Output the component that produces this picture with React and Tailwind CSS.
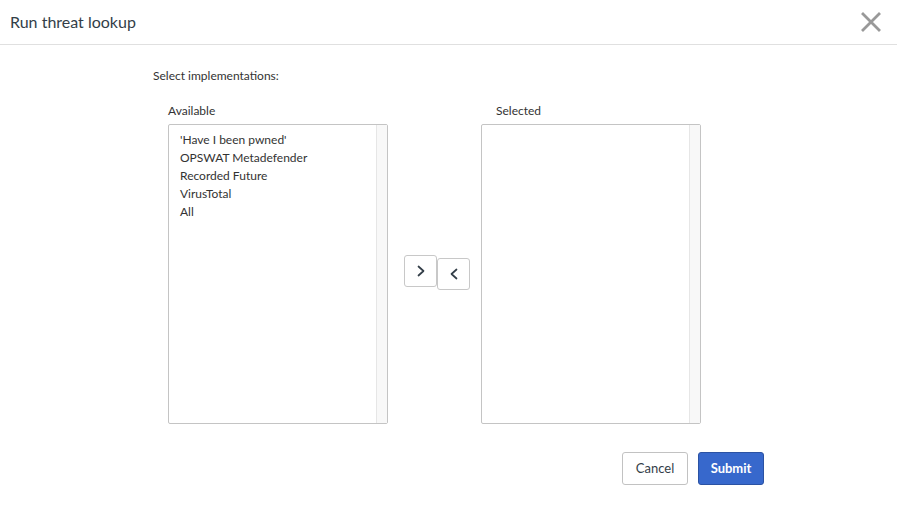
import React from 'react';

const available = ["'Have I been pwned'", 'OPSWAT Metadefender', 'Recorded Future', 'VirusTotal', 'All'];

// Simple list box with a fake scrollbar track on the right
const ListBox = ({ label, items = [] }) => (
    <div className="flex flex-col w-[220px]">
        <p className="text-[12px] leading-[16px] text-[#333] h-[23px] pt-[2px]">{label}</p>
        <div className="h-[300px] border border-[#c4c4c4] rounded-[2px] flex bg-white">
            <ul className="flex-1 pt-[6px] pl-[11px]">
                {items.map((it) => (
                    <li key={it} className="text-[12px] leading-[18px] text-[#333]">{it}</li>
                ))}
            </ul>
            <div className="w-[11px] bg-[#f8f8f8] border-l border-[#e6e6e6]" />
        </div>
    </div>
);

const MoveButton = ({ dir, className = '' }) => (
    <button className={`w-[33px] h-[32px] border border-[#c8c8c8] rounded-[3px] bg-white flex items-center justify-center ${className}`}>
        <svg width="10" height="12" viewBox="0 0 10 12" fill="none" stroke="#333e48" strokeWidth="1.7" strokeLinecap="round" strokeLinejoin="round">
            {dir === 'right' ? <path d="M2.5 1.5l5 4.5-5 4.5" /> : <path d="M7.5 1.5L2.5 6l5 4.5" />}
        </svg>
    </button>
);

export default function App() {
    return (
        <div className="w-[897px] h-[509px] bg-white text-[#333] overflow-hidden" style={{ fontFamily: '"Source Sans Pro", Lato, "Liberation Sans", sans-serif' }}>
            {/* Header */}
            <div className="h-[45px] border-b border-[#e0e0e0] flex items-center justify-between pl-[10px] pr-[16px]">
                <h1 className="text-[16px] text-[#333e48] leading-none pb-[1px]">Run threat lookup</h1>
                <svg width="20" height="20" viewBox="0 0 20 20" stroke="#999" strokeWidth="2.8" strokeLinecap="square">
                    <path d="M2 2l16 16M18 2L2 18" />
                </svg>
            </div>

            {/* Body */}
            <div className="pl-[153px] pt-[23px]">
                <p className="text-[12px] leading-[16px] text-[#333]">Select implementations:</p>
                <div className="flex pl-[15px] pt-[17px]">
                    <ListBox label="Available" items={available} />
                    <div className="flex items-start ml-[16px] mr-[11px] pt-[154px]">
                        <MoveButton dir="right" />
                        <MoveButton dir="left" className="mt-[3px]" />
                    </div>
                    <ListBox label={<span className="pl-[15px]">Selected</span>} />
                </div>
            </div>

            {/* Footer */}
            <div className="flex justify-end gap-[10px] pr-[133px] pt-[28px]">
                <button className="w-[66px] h-[33px] border border-[#c2c2c2] rounded-[3px] bg-white text-[13px] text-[#333e48]">Cancel</button>
                <button className="w-[66px] h-[33px] border border-[#2b52a3] rounded-[3px] bg-[#3768cc] text-[13px] font-bold text-white">Submit</button>
            </div>
        </div>
    );
}
